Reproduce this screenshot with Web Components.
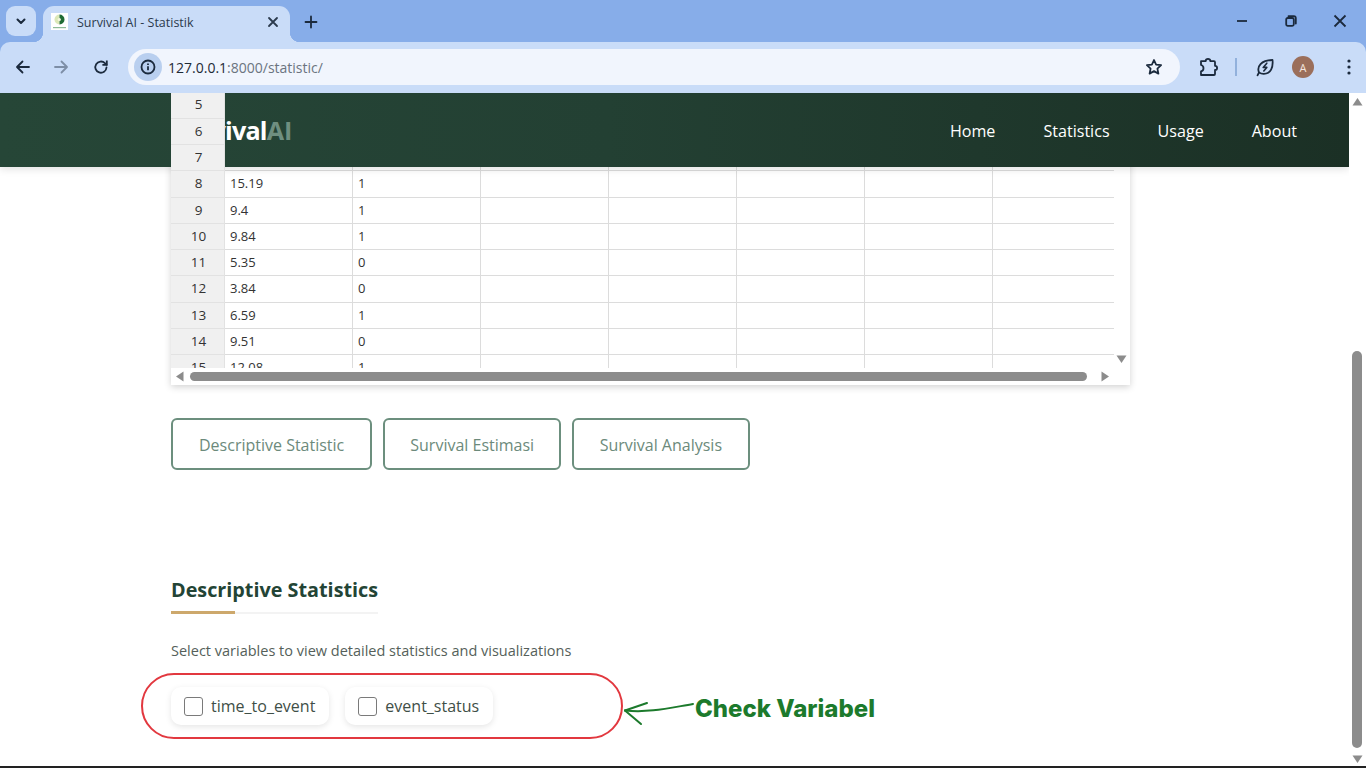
<!DOCTYPE html>
<html>
<head>
<meta charset="utf-8">
<title>Survival AI - Statistik</title>
<style>
    html, body { margin: 0; height: 100%; overflow: hidden; background: #fff; }
    body { display: flex; flex-direction: column; font-family: "Open Sans", "Liberation Sans", sans-serif; }
</style>
</head>
<body>
<browser-chrome></browser-chrome>
<page-view>
    <survival-nav></survival-nav>
    <data-grid></data-grid>
    <div slot="actions">
        <action-button>Descriptive Statistic</action-button>
        <action-button style="padding:0 25px">Survival Estimasi</action-button>
        <action-button style="padding:0 25.5px">Survival Analysis</action-button>
    </div>
    <section-title slot="section">Descriptive Statistics</section-title>
    <var-chip slot="chips">time_to_event</var-chip>
    <var-chip slot="chips">event_status</var-chip>
    <check-note slot="note"></check-note>
</page-view>

<script>
class BrowserChrome extends HTMLElement {
    connectedCallback() {
        this.attachShadow({ mode: 'open' });
        this.shadowRoot.innerHTML = `
            <style>
                :host { display: block; height: 93px; background: #87ade9; color: #1b2a3d; flex: none; }
                svg { display: block; fill: none; stroke: currentColor; stroke-width: 1.8; stroke-linecap: round; stroke-linejoin: round; }
                .strip { height: 42px; display: flex; align-items: flex-start; padding: 6px 0 0 6px; box-sizing: border-box; }
                .tabs-btn { width: 30px; height: 30px; border-radius: 9px; background: #c9dcf8; display: flex; align-items: center; justify-content: center; }
                .tab {
                    position: relative; width: 247px; height: 36px; margin-left: 7px; box-sizing: border-box;
                    background: #c9dcf8; border-radius: 11px 11px 0 0;
                    display: flex; align-items: center; padding: 0 10px 4px 8px;
                    font: 12.5px "Open Sans", sans-serif; color: #2b3a4d;
                }
                .tab::before, .tab::after { content: ""; position: absolute; bottom: 0; width: 10px; height: 10px; }
                .tab::before { left: -10px; background: radial-gradient(circle at 0 0, transparent 10px, #c9dcf8 10.5px); }
                .tab::after { right: -10px; background: radial-gradient(circle at 100% 0, transparent 10px, #c9dcf8 10.5px); }
                .favicon { width: 17px; height: 17px; background: #fff; margin-right: 9px; flex: none; margin-top: -1px; }
                .tab-title { flex: 1; white-space: nowrap; }
                .plus { margin: 8px 0 0 13px; }
                .win { margin-left: auto; display: flex; padding-right: 2px; }
                .win span { width: 49px; height: 30px; display: flex; align-items: center; justify-content: center; }
                .toolbar {
                    height: 51px; background: #c9dcf8; border-radius: 10px 10px 0 0; box-sizing: border-box;
                    display: flex; align-items: center; padding-bottom: 1px;
                }
                .nav-icon { width: 38px; display: flex; justify-content: center; flex: none; }
                .address {
                    width: 1052px; height: 36px; margin-left: 8px; border-radius: 18px; background: #f1f5fd;
                    display: flex; align-items: center; box-sizing: border-box; padding: 0 17px 0 6px; flex: none;
                }
                .info { width: 28px; height: 28px; border-radius: 50%; background: #b9cfef; display: flex; align-items: center; justify-content: center; margin-right: 6px; }
                .url { flex: 1; font: 14px "Open Sans", sans-serif; color: #6b7480; }
                .url b { font-weight: 400; color: #1e2a36; }
                .right { display: flex; align-items: center; margin-left: 18px; }
                .divider { width: 2px; height: 18px; background: #92b1dc; margin: 0 18px 0 17px; }
                .avatar { width: 22px; height: 22px; border-radius: 50%; background: #9b6f5b; color: #f3e6df; font: 11px "Open Sans", sans-serif; display: flex; align-items: center; justify-content: center; margin-left: 17px; }
                .dots { margin-left: 33px; }
            </style>
            <div class="strip">
                <div class="tabs-btn">
                    <svg width="12" height="12" viewBox="0 0 12 12"><path d="M2.5 4.5 6 8l3.5-3.5" stroke-width="2"/></svg>
                </div>
                <div class="tab">
                    <div class="favicon">
                        <svg width="17" height="17" viewBox="0 0 17 17" style="stroke:none">
                            <path d="M8.5 1.5a5 5 0 0 0 0 10z" fill="#dbe8b8"/>
                            <path d="M8.5 1.5a5 5 0 0 1 0 10z" fill="#1f6b35"/>
                            <circle cx="8.3" cy="6.5" r="1.6" fill="#f4f7df"/>
                            <rect x="2" y="14" width="13" height="1.2" fill="#8dbb98"/>
                        </svg>
                    </div>
                    <span class="tab-title">Survival AI - Statistik</span>
                    <svg width="12" height="12" viewBox="0 0 12 12" style="margin-right:1px"><path d="M2 2l8 8M10 2l-8 8"/></svg>
                </div>
                <svg class="plus" width="16" height="16" viewBox="0 0 16 16"><path d="M8 2.5v11M2.5 8h11"/></svg>
                <div class="win">
                    <span><svg width="12" height="12" viewBox="0 0 12 12" stroke-width="1.5"><path d="M1 6h10" stroke-linecap="butt"/></svg></span>
                    <span><svg width="12" height="12" viewBox="0 0 12 12" stroke-width="1.4"><rect x="1.2" y="3" width="7.6" height="7.8" rx="1.5"/><path d="M3.5 1.2h5.3A2 2 0 0 1 10.8 3.2v5.3"/></svg></span>
                    <span><svg width="14" height="14" viewBox="0 0 14 14" stroke-width="1.5"><path d="M1.5 1.5l11 11M12.5 1.5l-11 11" stroke-linecap="butt"/></svg></span>
                </div>
            </div>
            <div class="toolbar">
                <div class="nav-icon" style="margin-left:4px">
                    <svg width="18" height="18" viewBox="0 0 18 18"><path d="M15 9H3.5M8.5 3.5 3 9l5.5 5.5"/></svg>
                </div>
                <div class="nav-icon" style="color:#7d8ea6">
                    <svg width="18" height="18" viewBox="0 0 18 18"><path d="M3 9h11.5M9.5 3.5 15 9l-5.5 5.5"/></svg>
                </div>
                <div class="nav-icon" style="margin-left:2px">
                    <svg width="18" height="18" viewBox="0 0 18 18"><path d="M14.5 9.5a5.6 5.6 0 1 1-1.6-4.3l1.6 1.5"/><path d="M14.8 2.5v4.4h-4.4" stroke-linecap="butt" stroke-linejoin="miter"/></svg>
                </div>
                <div class="address">
                    <div class="info">
                        <svg width="16" height="16" viewBox="0 0 16 16" stroke-width="1.5"><circle cx="8" cy="8" r="6.5"/><path d="M8 7.3v4" stroke-linecap="butt"/><path d="M8 4.4v1.5" stroke-linecap="butt"/></svg>
                    </div>
                    <div class="url"><b>127.0.0.1</b>:8000/statistic/</div>
                    <svg width="18" height="18" viewBox="0 0 18 18" stroke-width="1.6"><path d="M9 2l2.1 4.6 5 .6-3.7 3.4 1 5L9 13.1l-4.4 2.5 1-5L1.9 7.2l5-.6z"/></svg>
                </div>
                <div class="right">
                    <svg width="20" height="20" viewBox="0 0 20 20" stroke-width="1.7"><path d="M3 4.2h4.6a2.4 2.4 0 0 1 4.8 0H16a1 1 0 0 1 1 1v3.6a2.1 2.1 0 0 1 0 4.2V17a1 1 0 0 1-1 1H3v-3.6a3.3 3.3 0 0 0 0-6.4z"/></svg>
                    <div class="divider"></div>
                    <svg width="20" height="20" viewBox="0 0 20 20" stroke-width="1.6"><path d="M4 15.5C1.6 9.5 6 3.3 17.5 3c.8 7.5-1.6 13.5-8.6 13.8-2 .1-3.6-.5-4.9-1.3z"/><path d="M2.5 18.3 4 15.5"/><path d="M11.8 6.2 8.2 10.4h3.6l-3 3.6" stroke-width="1.6"/></svg>
                    <div class="avatar">A</div>
                    <svg class="dots" width="4" height="16" viewBox="0 0 4 16" style="stroke:none;fill:currentColor"><circle cx="2" cy="2" r="1.6"/><circle cx="2" cy="8" r="1.6"/><circle cx="2" cy="14" r="1.6"/></svg>
                </div>
            </div>
        `;
    }
}
customElements.define('browser-chrome', BrowserChrome);

class PageView extends HTMLElement {
    connectedCallback() {
        this.attachShadow({ mode: 'open' });
        this.shadowRoot.innerHTML = `
            <style>
                :host { display: flex; flex: 1; min-height: 0; border-bottom: 2px solid #222; background: #fff; font-family: "Open Sans", sans-serif; }
                .main { flex: 1; position: relative; overflow: hidden; padding-left: 171px; }
                .actions { margin-top: 33px; }
                ::slotted([slot="actions"]) { display: flex; gap: 11px; }
                .chips { display: flex; gap: 16px; margin-top: 26px; }
                .desc { margin: 27px 0 0; font-size: 14.5px; line-height: 20px; color: #555f5a; }
                .section { margin-top: 105px; }
                .bar { width: 17px; flex: none; position: relative; background: #fff; }
                .thumb { position: absolute; left: 3px; width: 10px; top: 258px; height: 397px; border-radius: 5px; background: #8c8c8c; }
                .bar svg { position: absolute; left: 3px; fill: #8c8c8c; }
            </style>
            <div class="main">
                <slot></slot>
                <div class="actions"><slot name="actions"></slot></div>
                <div class="section"><slot name="section"></slot></div>
                <p class="desc">Select variables to view detailed statistics and visualizations</p>
                <div class="chips"><slot name="chips"></slot></div>
                <slot name="note"></slot>
            </div>
            <div class="bar">
                <svg style="top:4px" width="11" height="9" viewBox="0 0 11 9"><path d="M5.5 1 10.5 8.5H.5z"/></svg>
                <div class="thumb"></div>
                <svg style="top:662px" width="11" height="9" viewBox="0 0 11 9"><path d="M5.5 8 .5.5h10z"/></svg>
            </div>
        `;
    }
}
customElements.define('page-view', PageView);

class SurvivalNav extends HTMLElement {
    connectedCallback() {
        this.attachShadow({ mode: 'open' });
        this.shadowRoot.innerHTML = `
            <style>
                :host {
                    position: absolute; left: 0; right: 0; top: 0; height: 74px; z-index: 2;
                    background: linear-gradient(90deg, #264637 0%, #234033 45%, #1b3025 100%);
                    box-shadow: 0 2px 8px rgba(0,0,0,.12);
                    display: flex; align-items: center; box-sizing: border-box; padding: 0 52px 0 172px;
                }
                .logo { font-size: 25.2px; font-weight: 700; color: #fff; letter-spacing: -.8px; }
                .logo span { color: #6f8f80; letter-spacing: 0; }
                nav { margin-left: auto; display: flex; gap: 48px; padding-top: 1px; }
                a { color: #fff; font-size: 16.1px; font-weight: 500; text-decoration: none; }
            </style>
            <div class="logo">Survival<span>AI</span></div>
            <nav>
                <a href="#">Home</a>
                <a href="#">Statistics</a>
                <a href="#">Usage</a>
                <a href="#">About</a>
            </nav>
        `;
    }
}
customElements.define('survival-nav', SurvivalNav);

class DataGrid extends HTMLElement {
    connectedCallback() {
        const rows = [
            [5, '', ''], [6, '', ''], [7, '', ''],
            [8, '15.19', '1'], [9, '9.4', '1'], [10, '9.84', '1'], [11, '5.35', '0'],
            [12, '3.84', '0'], [13, '6.59', '1'], [14, '9.51', '0'], [15, '12.08', '1']
        ];
        const blanks = '<div class="c"></div>'.repeat(5);
        const body = rows.map(r => `
            <div class="row">
                <div class="head">${r[0]}</div>
                <div class="c">${r[1]}</div>
                <div class="c">${r[2]}</div>
                ${blanks}
            </div>`).join('');
        this.attachShadow({ mode: 'open' });
        this.shadowRoot.innerHTML = `
            <style>
                :host { display: block; width: 959px; height: 292px; background: #fff; box-shadow: 0 2px 7px rgba(0,0,0,.18); font: 13px "Open Sans", sans-serif; color: #333; }
                .view { display: flex; flex-direction: column; height: 275px; width: 943px; overflow: hidden; }
                .rows { margin-top: -.6px; }
                .row { display: grid; grid-template-columns: 54px 128px repeat(5, 128px) 121px; height: 26.3px; box-sizing: border-box; }
                .head { position: relative; z-index: 3; background: #f0f0f0; text-align: center; font-size: 13.5px; line-height: 25px; border-bottom: 1px solid #e2e2e2; border-right: 1px solid #e2e2e2; box-sizing: border-box; padding-left: 2px; color: #333; }
                .c { padding-left: 5px; line-height: 25px; border-right: 1px solid #dcdcdc; border-bottom: 1px solid #dcdcdc; box-sizing: border-box; }
                .row .c:last-child { border-right: 0; }
                .hbar { height: 17px; position: relative; }
                .hthumb { position: absolute; left: 19px; width: 897px; top: 4px; height: 9px; border-radius: 5px; background: #8c8c8c; }
                svg { position: absolute; fill: #8c8c8c; }
            </style>
            <div class="view"><div class="rows">${body}</div></div>
            <div class="hbar">
                <svg style="left:4px;top:3px" width="9" height="11" viewBox="0 0 9 11"><path d="M1 5.5 8.5.5v10z"/></svg>
                <div class="hthumb"></div>
                <svg style="left:930px;top:3px" width="9" height="11" viewBox="0 0 9 11"><path d="M8 5.5.5 10.5V.5z"/></svg>
                <svg style="left:945px;top:-13px" width="11" height="9" viewBox="0 0 11 9"><path d="M5.5 8 .5.5h10z"/></svg>
            </div>
        `;
    }
}
customElements.define('data-grid', DataGrid);

class ActionButton extends HTMLElement {
    connectedCallback() {
        this.attachShadow({ mode: 'open' });
        this.shadowRoot.innerHTML = `
            <style>
                :host {
                    display: block; box-sizing: border-box; height: 52px; padding: 0 26px;
                    border: 2px solid #6c8f7e; border-radius: 6px; background: #fff;
                    color: #6c8a7b; font-size: 16px; line-height: 50px; white-space: nowrap;
                }
            </style>
            <slot></slot>
        `;
    }
}
customElements.define('action-button', ActionButton);

class SectionTitle extends HTMLElement {
    connectedCallback() {
        this.attachShadow({ mode: 'open' });
        this.shadowRoot.innerHTML = `
            <style>
                :host { display: block; width: max-content; position: relative; padding-bottom: 7px; border-bottom: 2px solid #f3f3f3; color: #234435; font-size: 19.8px; font-weight: 700; line-height: 30px; }
                :host::after { content: ""; position: absolute; left: 0; bottom: -2px; width: 64px; height: 3px; background: #cda86c; }
            </style>
            <slot></slot>
        `;
    }
}
customElements.define('section-title', SectionTitle);

class VarChip extends HTMLElement {
    connectedCallback() {
        this.attachShadow({ mode: 'open' });
        this.shadowRoot.innerHTML = `
            <style>
                :host {
                    display: flex; align-items: center; gap: 8px; box-sizing: border-box; height: 38px; padding: 0 14px 0 13px;
                    background: #fff; border-radius: 10px; box-shadow: 0 2px 6px rgba(0,0,0,.1);
                    font-size: 16px; color: #3f4f47;
                }
                .box { width: 19px; height: 19px; box-sizing: border-box; border: 1.5px solid #7a7a7a; border-radius: 3px; background: #fff; }
            </style>
            <div class="box"></div>
            <slot></slot>
        `;
    }
}
customElements.define('var-chip', VarChip);

class CheckNote extends HTMLElement {
    connectedCallback() {
        this.attachShadow({ mode: 'open' });
        this.shadowRoot.innerHTML = `
            <style>
                :host { display: block; position: absolute; left: 141px; top: 580px; width: 760px; height: 66px; pointer-events: none; }
                .ring { position: absolute; left: 0; top: 0; width: 482px; height: 66px; box-sizing: border-box; border: 2px solid #e2383f; border-radius: 33px; }
                svg { position: absolute; left: 478px; top: 20px; overflow: visible; fill: none; stroke: #1c7a2c; stroke-width: 2; stroke-linecap: round; stroke-linejoin: round; }
                .label { position: absolute; left: 554px; top: 21px; font: 800 24px/30px Inter, "Open Sans", sans-serif; color: #1c7a2c; white-space: nowrap; }
            </style>
            <div class="ring"></div>
            <svg width="80" height="30" viewBox="0 0 80 30">
                <path d="M6 17.5C30 20 50 15 74 11"/>
                <path d="M6 17.5 28 10"/>
                <path d="M6 17.5 22 31"/>
            </svg>
            <div class="label">Check Variabel</div>
        `;
    }
}
customElements.define('check-note', CheckNote);
</script>
</body>
</html>
